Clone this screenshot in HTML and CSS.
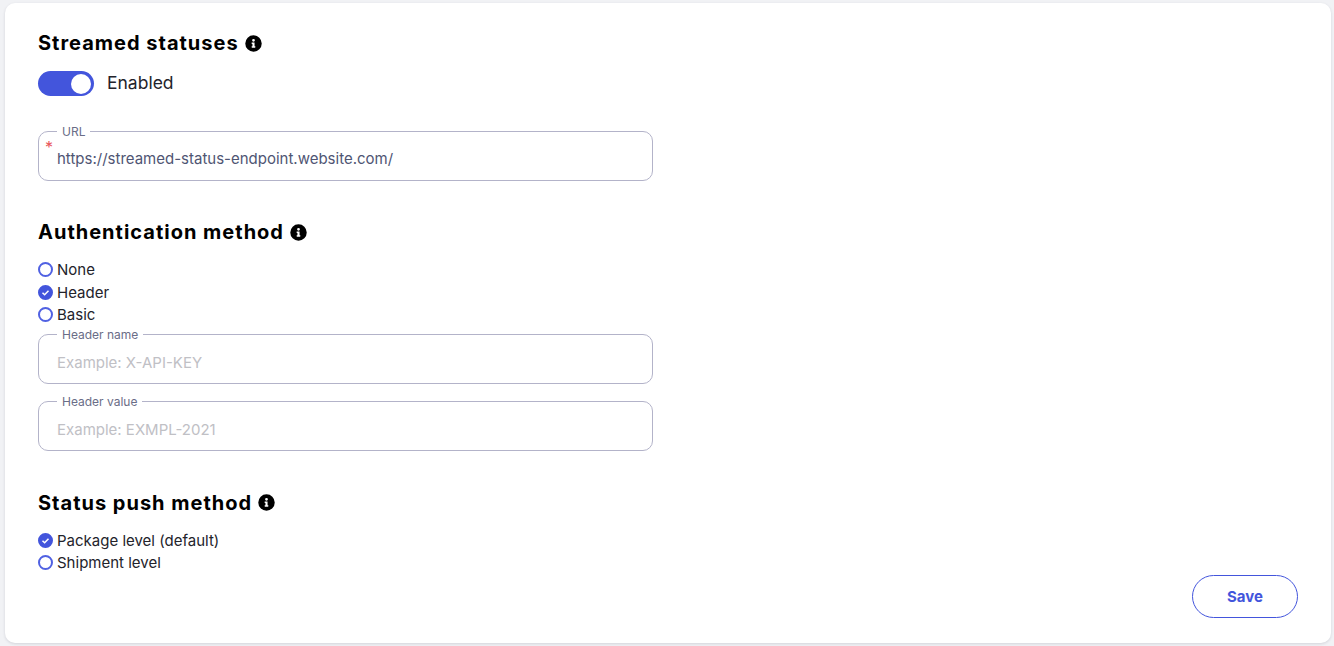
FILE: index.html
```html
<!DOCTYPE html>
<html lang="en">
<head>
<meta charset="utf-8">
<title>Streamed statuses</title>
<link rel="stylesheet" href="styles.css">
</head>
<body>
<main class="card">
  <section class="section section-stream">
    <h2 class="heading">Streamed statuses
      <svg class="info" viewBox="0 0 512 512"><path d="M256 8a248 248 0 1 0 0 496 248 248 0 0 0 0-496zm0 110a42 42 0 1 1 0 84 42 42 0 0 1 0-84zm56 254c0 7-5 12-12 12h-88c-7 0-12-5-12-12v-24c0-7 5-12 12-12h12v-64h-12c-7 0-12-5-12-12v-24c0-7 5-12 12-12h64c7 0 12 5 12 12v100h12c7 0 12 5 12 12v24z"/></svg>
    </h2>
    <div class="toggle-row">
      <span class="toggle"><span class="knob"></span></span>
      <span class="toggle-label">Enabled</span>
    </div>
    <fieldset class="field field-url">
      <legend class="legend">URL</legend>
      <span class="required">*</span>
      <span class="value">https://streamed-status-endpoint.website.com/</span>
    </fieldset>
  </section>

  <section class="section section-auth">
    <h2 class="heading">Authentication method
      <svg class="info" viewBox="0 0 512 512"><path d="M256 8a248 248 0 1 0 0 496 248 248 0 0 0 0-496zm0 110a42 42 0 1 1 0 84 42 42 0 0 1 0-84zm56 254c0 7-5 12-12 12h-88c-7 0-12-5-12-12v-24c0-7 5-12 12-12h12v-64h-12c-7 0-12-5-12-12v-24c0-7 5-12 12-12h64c7 0 12 5 12 12v100h12c7 0 12 5 12 12v24z"/></svg>
    </h2>
    <ul class="radios">
      <li class="radio"><span class="dot"></span>None</li>
      <li class="radio"><span class="dot dot-on"><svg viewBox="0 0 15 15"><path d="M4.5 7.8l2.1 2 3.9-4.1"/></svg></span>Header</li>
      <li class="radio"><span class="dot"></span>Basic</li>
    </ul>
    <fieldset class="field">
      <legend class="legend">Header name</legend>
      <span class="placeholder">Example: X-API-KEY</span>
    </fieldset>
    <fieldset class="field field-second">
      <legend class="legend">Header value</legend>
      <span class="placeholder">Example: EXMPL-2021</span>
    </fieldset>
  </section>

  <section class="section section-push">
    <h2 class="heading">Status push method
      <svg class="info" viewBox="0 0 512 512"><path d="M256 8a248 248 0 1 0 0 496 248 248 0 0 0 0-496zm0 110a42 42 0 1 1 0 84 42 42 0 0 1 0-84zm56 254c0 7-5 12-12 12h-88c-7 0-12-5-12-12v-24c0-7 5-12 12-12h12v-64h-12c-7 0-12-5-12-12v-24c0-7 5-12 12-12h64c7 0 12 5 12 12v100h12c7 0 12 5 12 12v24z"/></svg>
    </h2>
    <ul class="radios">
      <li class="radio"><span class="dot dot-on"><svg viewBox="0 0 15 15"><path d="M4.5 7.8l2.1 2 3.9-4.1"/></svg></span>Package level (default)</li>
      <li class="radio"><span class="dot"></span>Shipment level</li>
    </ul>
  </section>

  <div class="actions"><button class="save" type="button">Save</button></div>
</main>
</body>
</html>
```

FILE: styles.css
```css
* { box-sizing: border-box; }
html, body { height: 100%; }
body {
  margin: 0;
  background: #f1f2f5;
  font-family: Inter, "Liberation Sans", sans-serif;
  color: #23232b;
  overflow: hidden;
}
.card {
  margin: 3px 3px 3px 5px;
  height: 640px;
  background: #fff;
  border-radius: 10px;
  box-shadow: 0 1px 3px rgba(30, 30, 60, 0.14);
  padding: 28px 33px 0;
  display: flex;
  flex-direction: column;
}
.section { width: 615px; }
.heading {
  margin: 0;
  height: 24px;
  display: flex;
  align-items: center;
  gap: 6px;
  font-size: 20px;
  font-weight: 700;
  line-height: 24px;
  letter-spacing: 1px;
  color: #000;
}
.info { width: 17px; height: 17px; fill: #000; }
.toggle-row {
  margin-top: 16px;
  display: flex;
  align-items: center;
  gap: 13px;
}
.toggle {
  width: 56px;
  height: 25px;
  border-radius: 13px;
  background: #4355dc;
  display: flex;
  align-items: center;
  justify-content: flex-end;
  padding-right: 3px;
}
.knob { width: 20px; height: 20px; border-radius: 50%; background: #fff; }
.toggle-label { font-size: 17.5px; line-height: 23px; padding-bottom: 2px; }
.field {
  position: relative;
  margin: 0;
  padding: 0 18px;
  height: 57px;
  border: 1px solid #b3b3c9;
  border-radius: 10px;
  display: flex;
  align-items: center;
  font-size: 15px;
}
.field-url { margin-top: 28px; padding-bottom: 2px; }
.field-second { margin-top: 10px; }
.legend {
  margin-left: 0;
  padding: 0 5px;
  font-size: 12px;
  line-height: 15px;
  color: #6a6d87;
}
.required {
  position: absolute;
  left: 6px;
  top: -2px;
  color: #e8555a;
  font-size: 16px;
}
.value { color: #4f5573; }
.placeholder { color: #c0c0c5; }
.section-auth { margin-top: 39px; }
.section-push { margin-top: 40px; }
.radios {
  list-style: none;
  margin: 14.5px 0 0.5px;
  padding: 0;
}
.radio {
  display: flex;
  align-items: center;
  gap: 4px;
  height: 22.5px;
  font-size: 15px;
}
.dot {
  width: 15px;
  height: 15px;
  border: 2px solid #5061e2;
  border-radius: 50%;
  flex: none;
  display: flex;
}
.dot-on { background: #4355dc; border-color: #4355dc; }
.dot svg {
  width: 15px;
  height: 15px;
  margin: -2px;
  flex: none;
  fill: none;
  stroke: #fff;
  stroke-width: 1.5;
}
.actions {
  margin-top: auto;
  margin-bottom: 25px;
  display: flex;
  justify-content: flex-end;
}
.save {
  width: 106px;
  height: 43px;
  border: 1px solid #4355dc;
  border-radius: 22px;
  background: #fff;
  color: #4355dc;
  font-family: inherit;
  font-size: 15px;
  font-weight: 700;
}
```
